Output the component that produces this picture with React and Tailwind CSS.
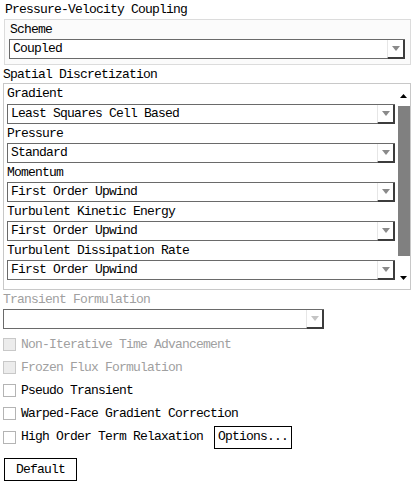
import React from "react";

const Arrow = ({ color = "#7a7a7a" }) => (
  <svg width="8" height="5" viewBox="0 0 8 5">
    <path d="M0 0 H8 L4 5 Z" fill={color} />
  </svg>
);

const Select = ({ value, className = "", disabled = false }) => (
  <div
    className={`flex h-[20px] items-stretch bg-white border-t border-l border-[#6a6a6a] ${className}`}
  >
    <div
      className={`flex flex-1 items-center pl-[3px] border-b border-[#6a6a6a] ${
        disabled ? "text-[#a0a0a0]" : "text-black"
      }`}
    >
      {value}
    </div>
    <div className="flex w-[18px] items-center justify-center border-l border-[#e6e6e6] border-r-2 border-b-2 border-r-[#3c3c3c] border-b-[#3c3c3c]">
      <Arrow color={disabled ? "#c4c4c4" : "#8a8a8a"} />
    </div>
  </div>
);

const Field = ({ label, value, first }) => (
  <div>
    <div className={`flex items-center pl-[3px] ${first ? "h-[20px]" : "h-[19px]"}`}>
      {label}
    </div>
    <Select value={value} className="ml-[3px]" />
  </div>
);

const Check = ({ label, disabled }) => (
  <div className="flex h-[23px] items-center">
    <div
      className={`ml-[3px] h-[13px] w-[13px] border ${
        disabled ? "border-[#c8c8c8] bg-[#ececec]" : "border-[#b4b4b4] bg-white"
      }`}
    />
    <span className={`ml-[5px] ${disabled ? "text-[#a0a0a0]" : "text-black"}`}>
      {label}
    </span>
  </div>
);

const fields = [
  ["Gradient", "Least Squares Cell Based"],
  ["Pressure", "Standard"],
  ["Momentum", "First Order Upwind"],
  ["Turbulent Kinetic Energy", "First Order Upwind"],
  ["Turbulent Dissipation Rate", "First Order Upwind"],
];

export default function App() {
  return (
    <div className="w-[416px] h-[486px] bg-white text-[13px] leading-[14px] tracking-[-0.8px] text-black font-['Liberation_Mono',monospace] overflow-hidden">
      <div className="flex h-[19px] items-center pl-[5px]">Pressure-Velocity Coupling</div>

      <div className="ml-[4px] w-[407px] h-[46px] border border-[#dcdcdc] bg-[#fbfbfb]">
        <div className="flex h-[19px] items-center pl-[5px] pt-[1px]">Scheme</div>
        <Select value="Coupled" className="ml-[4px] w-[396px]" />
      </div>

      <div className="flex h-[18px] items-center pl-[3px] pt-[2px]">Spatial Discretization</div>

      <div className="ml-[3px] w-[408px] h-[207px] border border-[#c8c8c8] flex">
        <div className="w-[391px]">
          {fields.map(([l, v], i) => (
            <Field key={l} label={l} value={v} first={i === 0} />
          ))}
        </div>
        <div className="w-[13px] ml-[2px] flex flex-col items-center">
          <div className="h-[22px] flex items-center justify-center pt-[1px]">
            <svg width="7" height="4" viewBox="0 0 7 4">
              <path d="M0 4 H7 L3.5 0 Z" fill="#000" />
            </svg>
          </div>
          <div className="w-[12px] h-[150px] bg-[#808080]" />
          <div className="flex-1 flex items-end justify-center pb-[9px]">
            <svg width="7" height="4" viewBox="0 0 7 4">
              <path d="M0 0 H7 L3.5 4 Z" fill="#000" />
            </svg>
          </div>
        </div>
      </div>

      <div className="flex h-[19px] items-center pl-[3px] pt-[1px] text-[#a0a0a0]">
        Transient Formulation
      </div>
      <Select value="" disabled className="ml-[3px] w-[321px]" />

      <div className="pt-[4px]">
        <Check label="Non-Iterative Time Advancement" disabled />
        <Check label="Frozen Flux Formulation" disabled />
        <Check label="Pseudo Transient" />
        <Check label="Warped-Face Gradient Correction" />
        <div className="flex h-[24px] items-center">
          <div className="ml-[3px] h-[13px] w-[13px] border border-[#b4b4b4] bg-white" />
          <span className="ml-[5px]">High Order Term Relaxation</span>
          <button className="ml-[11px] h-[23px] w-[78px] border border-black bg-white text-[13px] tracking-[-0.8px]">
            Options...
          </button>
        </div>
      </div>

      <button className="ml-[4px] mt-[9px] h-[23px] w-[73px] border border-black bg-white text-[13px] tracking-[-0.8px]">
        Default
      </button>
    </div>
  );
}
